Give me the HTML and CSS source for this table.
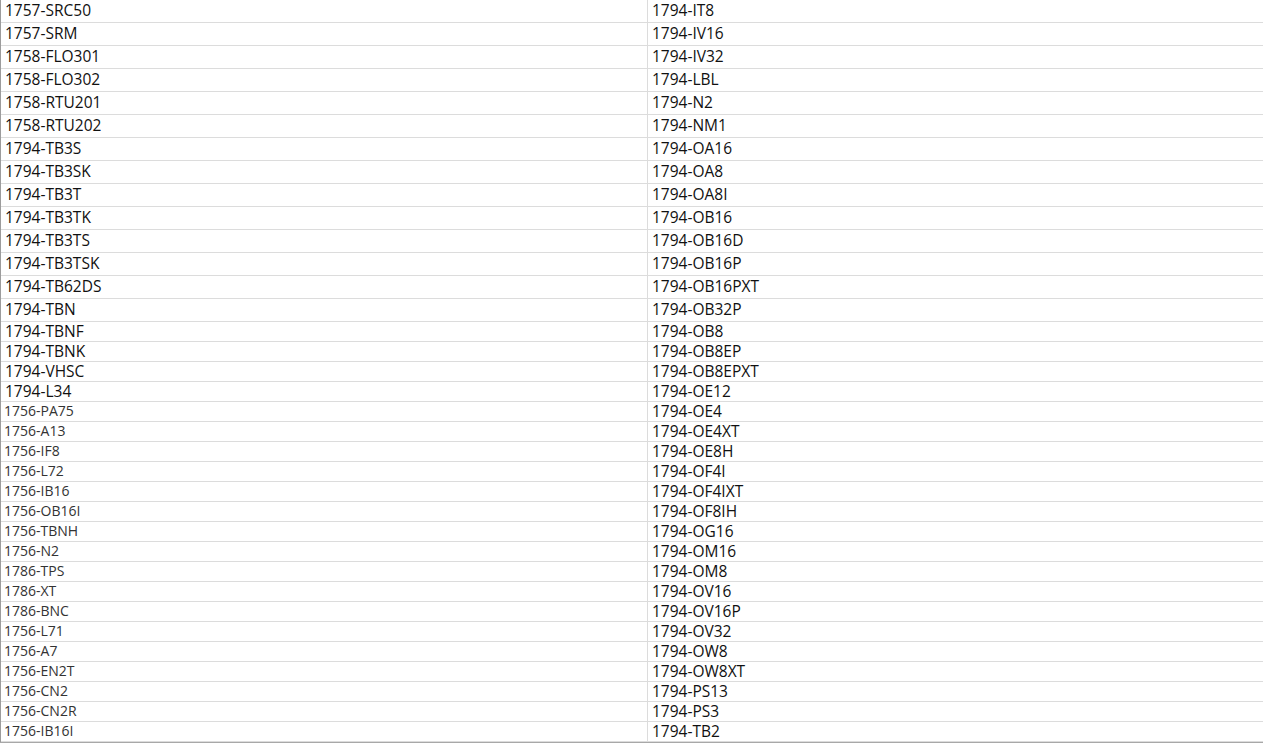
FILE: index.html
```html
<!doctype html>
<html lang="en">
<head>
  <meta charset="utf-8" />
  <meta name="viewport" content="width=device-width,initial-scale=1" />
  <title>Parts list</title>
  <link rel="stylesheet" href="styles.css">
</head>
<body>

<div class="sheet">
  <div class="row tall"><div class="cell">1757-SRC50</div><div class="cell">1794-IT8</div></div>
  <div class="row tall"><div class="cell">1757-SRM</div><div class="cell">1794-IV16</div></div>
  <div class="row tall"><div class="cell">1758-FLO301</div><div class="cell">1794-IV32</div></div>
  <div class="row tall"><div class="cell">1758-FLO302</div><div class="cell">1794-LBL</div></div>
  <div class="row tall"><div class="cell">1758-RTU201</div><div class="cell">1794-N2</div></div>
  <div class="row tall"><div class="cell">1758-RTU202</div><div class="cell">1794-NM1</div></div>
  <div class="row tall"><div class="cell">1794-TB3S</div><div class="cell">1794-OA16</div></div>
  <div class="row tall"><div class="cell">1794-TB3SK</div><div class="cell">1794-OA8</div></div>
  <div class="row tall"><div class="cell">1794-TB3T</div><div class="cell">1794-OA8I</div></div>
  <div class="row tall"><div class="cell">1794-TB3TK</div><div class="cell">1794-OB16</div></div>
  <div class="row tall"><div class="cell">1794-TB3TS</div><div class="cell">1794-OB16D</div></div>
  <div class="row tall"><div class="cell">1794-TB3TSK</div><div class="cell">1794-OB16P</div></div>
  <div class="row tall"><div class="cell">1794-TB62DS</div><div class="cell">1794-OB16PXT</div></div>
  <div class="row tall"><div class="cell">1794-TBN</div><div class="cell">1794-OB32P</div></div>
  <div class="row"><div class="cell">1794-TBNF</div><div class="cell">1794-OB8</div></div>
  <div class="row"><div class="cell">1794-TBNK</div><div class="cell">1794-OB8EP</div></div>
  <div class="row"><div class="cell">1794-VHSC</div><div class="cell">1794-OB8EPXT</div></div>
  <div class="row"><div class="cell">1794-L34</div><div class="cell">1794-OE12</div></div>
  <div class="row"><div class="cell small">1756-PA75</div><div class="cell">1794-OE4</div></div>
  <div class="row"><div class="cell small">1756-A13</div><div class="cell">1794-OE4XT</div></div>
  <div class="row"><div class="cell small">1756-IF8</div><div class="cell">1794-OE8H</div></div>
  <div class="row"><div class="cell small">1756-L72</div><div class="cell">1794-OF4I</div></div>
  <div class="row"><div class="cell small">1756-IB16</div><div class="cell">1794-OF4IXT</div></div>
  <div class="row"><div class="cell small">1756-OB16I</div><div class="cell">1794-OF8IH</div></div>
  <div class="row"><div class="cell small">1756-TBNH</div><div class="cell">1794-OG16</div></div>
  <div class="row"><div class="cell small">1756-N2</div><div class="cell">1794-OM16</div></div>
  <div class="row"><div class="cell small">1786-TPS</div><div class="cell">1794-OM8</div></div>
  <div class="row"><div class="cell small">1786-XT</div><div class="cell">1794-OV16</div></div>
  <div class="row"><div class="cell small">1786-BNC</div><div class="cell">1794-OV16P</div></div>
  <div class="row"><div class="cell small">1756-L71</div><div class="cell">1794-OV32</div></div>
  <div class="row"><div class="cell small">1756-A7</div><div class="cell">1794-OW8</div></div>
  <div class="row"><div class="cell small">1756-EN2T</div><div class="cell">1794-OW8XT</div></div>
  <div class="row"><div class="cell small">1756-CN2</div><div class="cell">1794-PS13</div></div>
  <div class="row"><div class="cell small">1756-CN2R</div><div class="cell">1794-PS3</div></div>
  <div class="row"><div class="cell small">1756-IB16I</div><div class="cell">1794-TB2</div></div>
</div>
<div class="scrollbar"><div class="scroll-left"></div><div class="scroll-track"></div></div>

</body>
</html>
```

FILE: styles.css
```css
body{margin:0;background:#fff;font-family:"Open Sans","Noto Sans",Arial,sans-serif;color:#111;overflow:hidden;}
.sheet{border-left:1px solid #9c9c9c;width:1262px;}
.row{display:grid;grid-template-columns:647px 1fr;height:20px;}
.row.tall{height:23px;}
.cell{box-sizing:border-box;border-bottom:1px solid #dcdcdc;padding-left:4px;font-size:15.5px;line-height:19px;white-space:nowrap;}
.row.tall .cell{line-height:21px;}
.cell:first-child{border-right:1px solid #dcdcdc;}
.cell.small{font-size:14px;color:#333;padding-left:3px;line-height:18px;}
.scrollbar{display:flex;height:2px;border-top:1px solid #a8a8a8;}
.scroll-left{width:186px;}
.scroll-track{flex:1;border-left:1px solid #a8a8a8;}
```
